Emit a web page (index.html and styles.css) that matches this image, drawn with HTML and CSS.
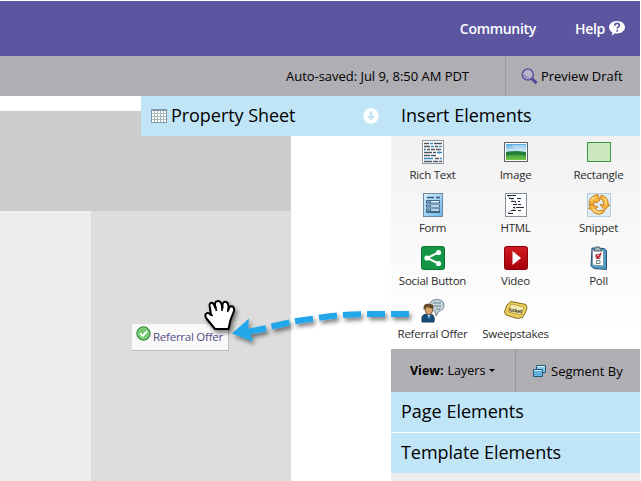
FILE: index.html
```html
<!DOCTYPE html>
<html lang="en">
<head>
<meta charset="utf-8">
<title>Landing page editor</title>
<link rel="stylesheet" href="styles.css">
</head>
<body>
<div class="app">
  <header class="topbar">
    <span class="community">Community</span>
    <span class="help">Help</span>
    <svg class="help-icon" width="16" height="15" viewBox="0 0 16 15"><path fill="#fff" d="M8 0c4.500 0 8 2.800 8 6.200s-3.500 6.200-8 6.200l-1.700-.1L2.500 14.500l.9-3.200C1.300 10.200 0 8.400 0 6.200 0 2.800 3.500 0 8 0z"/><path d="M5.800 4.700c0-1.600 1-2.300 2.300-2.300s2.300.7 2.300 1.900c0 1.600-2.200 1.500-2.200 3.200" fill="none" stroke="#5c55a0" stroke-width="1.700"/><rect x="7.300" y="8.800" width="1.800" height="1.800" fill="#5c55a0"/></svg>
  </header>
  <div class="toolbar">
    <span class="saved">Auto-saved: Jul 9, 8:50 AM PDT</span>
    <div class="preview">
      <svg width="17" height="17" viewBox="0 0 17 17"><circle cx="6.800" cy="6.500" r="5.500" fill="#b9b6cb" stroke="#5b54a0" stroke-width="1.500"/><path d="M3.700 6.500a3.200 3.200 0 0 0 4 3" fill="none" stroke="#716aac"/><path d="M10.800 10.700l4.700 4.500" stroke="#514997" stroke-width="3"/></svg>
      <span>Preview Draft</span>
    </div>
  </div>
  <main class="workspace">
    <section class="canvas">
      <div class="hero-block"></div>
      <div class="columns"><div class="side-block"></div><div class="content-block"></div></div>
      <div class="property">
        <svg width="16" height="14" viewBox="0 0 16 14" shape-rendering="crispEdges"><rect width="16" height="14" fill="#7f96a5"/><rect x="1" y="2" width="14" height="11" fill="#fff"/><path d="M3.500 2v11M6.500 2v11M9.500 2v11M12.500 2v11M1 4.500h14M1 7.500h14M1 10.500h14" stroke="#a9bbb9"/></svg>
        <span class="property-title">Property Sheet</span>
        <svg class="down" width="16" height="16" viewBox="0 0 16 16"><circle cx="8" cy="8" r="7.700" fill="#fff"/><path d="M6.700 3.500h2.600v4.400h2.800L8 12.300 3.900 7.900h2.800z" fill="#c0e5f7"/></svg>
      </div>
      <div class="dragged">
        <svg width="15" height="15" viewBox="0 0 15 15"><circle cx="7.500" cy="7.500" r="6.600" fill="#5cb95a" stroke="#358c3b" stroke-width="1.200"/><circle cx="7.500" cy="7.300" r="5.300" fill="#70c66c" stroke="#a8dda3" stroke-width=".7"/><path d="M4.200 7.500l2.500 2.400L11 5.200" fill="none" stroke="#fff" stroke-width="2"/></svg>
        <span>Referral Offer</span>
      </div>
    </section>
    <aside class="panel">
      <h2 class="heading insert">Insert Elements</h2>
      <div class="palette">
        <div class="tile"><svg width="24" height="24" viewBox="0 0 24 24"><rect x="1.500" y=".5" width="21" height="23" fill="#fff" stroke="#8998a4"/><path d="M3 3.500h5M13 3.500h8M3 6.500h6M3 9.500h1M6 9.500h3M3 12.500h8M17 12.500h2M3 15.500h6M3 18.500h1M14 18.500h4M3 21.500h8" stroke="#4b5560" stroke-width="1.400"/><path d="M9 3.500h3M10 6.500h3M18 6.500h3M16 12.500h5M3 9.500h2M3 18.500h9M19 18.500h2" stroke="#318bc2" stroke-width="1.400"/><path d="M14 6.500h3M10 9.500h4M15 9.500h5M12 12.500h3M10 15.500h5M12 21.500h5M18 21.500h3" stroke="#4b5560" stroke-width="1.400"/></svg><span>Rich Text</span></div>
        <div class="tile"><svg width="24" height="24" viewBox="0 0 24 24"><defs><linearGradient id="sky" x2="0" y2="1"><stop stop-color="#55a7e3"/><stop offset=".48" stop-color="#d7effa"/><stop offset=".5" stop-color="#36883a"/><stop offset="1" stop-color="#70ca45"/></linearGradient></defs><rect x=".5" y="2.500" width="23" height="19" fill="#fff" stroke="#54616b"/><rect x="2" y="4" width="20" height="16" fill="url(#sky)"/><path d="M3 10q4-5 8-1t10 0v-4H9z" fill="#d5edf8" opacity=".5"/><path d="M2 12q9-2 20 0v4q-9-3-20 0z" fill="#237d3b"/></svg><span>Image</span></div>
        <div class="tile"><svg width="24" height="24" viewBox="0 0 24 24"><rect x=".5" y="2.500" width="23" height="19" fill="#cce8bf" stroke="#389743"/></svg><span>Rectangle</span></div>
        <div class="tile"><svg width="24" height="24" viewBox="0 0 24 24"><defs><linearGradient id="form" x2="1" y2="1"><stop stop-color="#d9eefc"/><stop offset="1" stop-color="#69b6ec"/></linearGradient></defs><rect x="2.500" y=".5" width="19" height="23" fill="url(#form)" stroke="#73889a"/><path d="M6 4.500h7M15 4.500h4" stroke="#345978" stroke-width="1.500"/><path d="M5 7h14v3.500H5zM5 11.500h14v3H5zM5 15.500h14v4.500H5z" fill="#41698a"/><path d="M10 8.700h8M10 13h8M10 17h8" stroke="#e8f6ff" stroke-width="1.500"/><path d="M6 8.700h3M6 13h3M6 17h3" stroke="#9dc8e4"/></svg><span>Form</span></div>
        <div class="tile"><svg width="24" height="24" viewBox="0 0 24 24"><rect x="1.500" y=".5" width="21" height="23" fill="#fff" stroke="#83909b"/><path d="M3 2.500h9M5 5.500h5M7 8.500h5M13 5.500h4M9 11.500h4M9 14.500h2M12 14.500h8M7 17.500h5M4 20.500h5M14 8.500h2M14 11.500h3M14 17.500h3" stroke="#222a32" stroke-width="1.200"/><path d="M4 3l9 8M13 14l-9 6" stroke="#555" stroke-width=".6"/></svg><span>HTML</span></div>
        <div class="tile"><svg width="24" height="24" viewBox="0 0 24 24"><rect x=".5" y=".5" width="23" height="23" fill="#e1edf5" stroke="#82acc9" stroke-dasharray="1 1"/><g fill="#f7b13b" stroke="#bd741c" stroke-width=".8" stroke-linejoin="round"><path d="M2 12C2 6 5 2 11 1.500L13 7 10 10 7 9 6.500 13z"/><path d="M14 2C19 3 22 7 21 12L23 12 17.500 17 13 11.500 16 12C17 9 16 7 13.500 6z"/><path d="M18 18C14 23 7 22 4 16L1.500 16 4 11 11 14 8.500 15.500C10 18 12 18.500 14 17z"/></g><path d="M4 8q1-3 5-3.500M17 5q3 3 2 7M6 16q4 5 8 3" stroke="#ffe193" stroke-width="1.300" fill="none"/></svg><span>Snippet</span></div>
        <div class="tile"><svg width="24" height="24" viewBox="0 0 24 24"><rect x=".5" y=".5" width="23" height="23" rx="2" fill="#159647" stroke="#087433"/><path d="M17.500 6.500L6 12l11.500 5.500" fill="none" stroke="#fff" stroke-width="2"/><g fill="#fff"><circle cx="17.500" cy="6.500" r="2.600"/><circle cx="6" cy="12" r="2.600"/><circle cx="17.500" cy="17.500" r="2.600"/></g></svg><span>Social Button</span></div>
        <div class="tile"><svg width="24" height="24" viewBox="0 0 24 24"><defs><linearGradient id="video" x2="0" y2="1"><stop stop-color="#d11a20"/><stop offset="1" stop-color="#a60009"/></linearGradient></defs><rect x=".5" y=".5" width="23" height="23" rx="2" fill="url(#video)" stroke="#8c000b"/><path d="M8.500 5v14l8.500-7z" fill="#fff"/></svg><span>Video</span></div>
        <div class="tile"><svg width="24" height="24" viewBox="0 0 24 24"><path d="M5 2l12 .5 2.500 2v19L7 22.500 4 20z" fill="#4a9bca" stroke="#25526f"/><path d="M5.500 4l11 1v15l-11-1z" fill="#fff" stroke="#8099aa"/><path d="M8.500 1h4l2 4H7z" fill="#a5b3bc" stroke="#56656f"/><path d="M9 8.500h4v4H9zM9.500 14.500h3.500v3H9.500z" fill="none" stroke="#787b80"/><path d="M9 9l2 3 3-5" fill="none" stroke="#d01d2b" stroke-width="1.600"/></svg><span>Poll</span></div>
        <div class="tile"><svg width="24" height="24" viewBox="0 0 24 24"><path d="M9 4c2-5 14-5 14 2 0 4-3 6-5 6l-3 5-1-5C9 11 8 8 9 4z" fill="#c6d5dd" stroke="#718492"/><path d="M12 4h8M13 7h7M15 10h4" stroke="#6c8593"/><path d="M1 23v-5q1-3 5-3h4q4 1 3 8z" fill="#174d7c" stroke="#173854"/><path d="M6 15l2 5 2-5" fill="#97c7e9"/><ellipse cx="8" cy="10.500" rx="3.700" ry="5" fill="#dba66b" stroke="#785133"/><path d="M3 11C1 5 6 4 9 5c4 0 4 3 3 5L6 8z" fill="#684a28"/></svg><span>Referral Offer</span></div>
        <div class="tile"><svg width="24" height="24" viewBox="0 0 24 24"><path d="M7 2.500l15 3 1 3-1.500 5-3 5-5 1L2 16l-1.500-3L3 6z" fill="#ecd15a" stroke="#806b1d"/><path d="M7 5l13 3-3 8L4 13z" fill="#f7ecb0" stroke="#baa044"/><text x="5" y="12.500" transform="rotate(9 6 11)" class="ticket-text">ticket</text></svg><span>Sweepstakes</span></div>
      </div>
      <div class="view-bar">
        <div class="view"><b>View:</b><span>Layers</span><i></i></div>
        <div class="segment"><svg width="13" height="13" viewBox="0 0 13 13"><g stroke="#205879"><path d="M3.500.5h9v7h-9z" fill="#8bc7e6"/><path d="M.5 4.500h9v7h-9z" fill="#63b3df"/></g><path d="M4 1.500h8M1 5.500h8" stroke="#d5effb"/></svg><span>Segment By</span></div>
      </div>
      <h2 class="heading page">Page Elements</h2>
      <h2 class="heading template">Template Elements</h2>
      <div class="panel-end"></div>
    </aside>
  </main>
  <svg class="drag-overlay" width="641" height="481" viewBox="0 0 641 481">
    <defs><filter id="shadow" x="-20%" y="-50%" width="150%" height="220%"><feDropShadow dx="2" dy="3" stdDeviation="2" flood-opacity=".5"/></filter></defs>
    <g filter="url(#shadow)"><path d="M409 314H391M385 314H367M361 314.300q-9 0-18 .7M337 315.500q-9 .7-18 2.200M313 318.700q-9 1-18 2.500M289.500 322.500q-9 2-18 4M266 328.200q-9 2-18 3.500" fill="none" stroke="#24a7ea" stroke-width="6"/><path d="M232 333.500l17-15-1 10 5 13z" fill="#24a7ea"/></g>
    <g filter="url(#shadow)"><path d="M215 329L206.500 318.500C203.500 314 207.500 311 211 315L210 308C208 302 213 301 214.500 306L215.500 308 215 305C214.500 300 220 300 221.500 304L222.500 308V305C223 300 228 301 228.500 306V310C229 304.500 235 305 234 311L230.500 320 228.500 329z" fill="#fff" stroke="#000" stroke-width="2" stroke-linejoin="round"/><path d="M211 314l1.500 2M215 305l1.500 6M222 305v6M228.500 308l-1 4" fill="none" stroke="#000" stroke-width="1.600"/></g>
  </svg>
</div>
</body>
</html>
```
FILE: styles.css
```css
* { box-sizing: border-box; }
body { margin: 0; background: #fff; font-family: "Open Sans", sans-serif; overflow: hidden; }
svg { display: block; flex: none; }
.app { position: relative; width: 640px; height: 481px; padding-top: 1px; color: #000; }
.topbar { display: flex; align-items: center; justify-content: flex-end; height: 55px; padding-right: 15px; background: #5c55a0; color: #fff; font-size: 14px; font-weight: 600; letter-spacing: -.3px; }
.help { margin-left: 39px; }
.help-icon { margin-left: 4px; }
.toolbar { display: flex; height: 40px; align-items: center; justify-content: flex-end; background: #afaeb3; font-size: 13px; }
.saved { letter-spacing: -.03px; }
.preview { display: flex; align-items: center; gap: 3px; width: 135px; height: 40px; margin-left: 36px; padding-left: 15px; border-left: 1px solid #98979d; letter-spacing: -.02px; }
.workspace { display: flex; height: 385px; }
.canvas { position: relative; width: 391px; padding-top: 15px; }
.hero-block { width: 291px; height: 100px; background: #ccc; }
.columns { display: flex; height: 270px; }
.side-block { width: 91px; background: #ededed; }
.content-block { width: 200px; background: #ddd; }
.property { position: absolute; top: 0; right: 0; display: flex; align-items: center; width: 250px; height: 40px; padding: 0 12.500px 0 10px; gap: 4px; background: #c0e5f7; font-size: 18px; }
.property-title { line-height: 38px; padding-bottom: 2px; letter-spacing: -.05px; }
.property .down { margin-left: auto; }
.dragged { position: absolute; top: 228px; left: 132px; display: flex; align-items: center; gap: 2px; width: 97px; height: 27px; padding: 0 4px 2px; border: solid #bcbcbc; border-width: 0 1px 1px 0; background: #f9f9f9; color: #514b85; font-size: 11.500px; letter-spacing: -.25px; white-space: nowrap; }
.dragged svg { margin-top: -5px; }
.panel { width: 249px; }
.heading { margin: 0; height: 40px; padding-left: 10px; background: #c0e5f7; font-size: 18px; font-weight: 400; line-height: 39px; }
.palette { display: grid; grid-template-columns: repeat(3, 83px); grid-auto-rows: 53px; height: 213px; padding-top: 4px; background: linear-gradient(#f1f1f2, #fff 90%); color: #2b2b2b; font-size: 11.500px; letter-spacing: -.25px; }
.tile { display: flex; flex-direction: column; align-items: center; gap: 3px; line-height: 16px; white-space: nowrap; }
.ticket-text { font: bold 5px "Open Sans", sans-serif; fill: #302d20; }
.view-bar { display: flex; height: 43px; background: #afaeb3; font-size: 12.500px; }
.view { display: flex; align-items: center; gap: 4px; width: 125px; padding-left: 19px; border-right: 1px solid #98979d; }
.view i { border: solid transparent; border-width: 3px 3px 0; border-top-color: #000; }
.segment { display: flex; align-items: center; gap: 5px; padding: 1px 0 0 17px; font-size: 13px; }
.template { margin-top: 1px; letter-spacing: -.05px; }
.panel-end { height: 8px; background: #eee; }
.drag-overlay { position: absolute; inset: 0; pointer-events: none; }
```
